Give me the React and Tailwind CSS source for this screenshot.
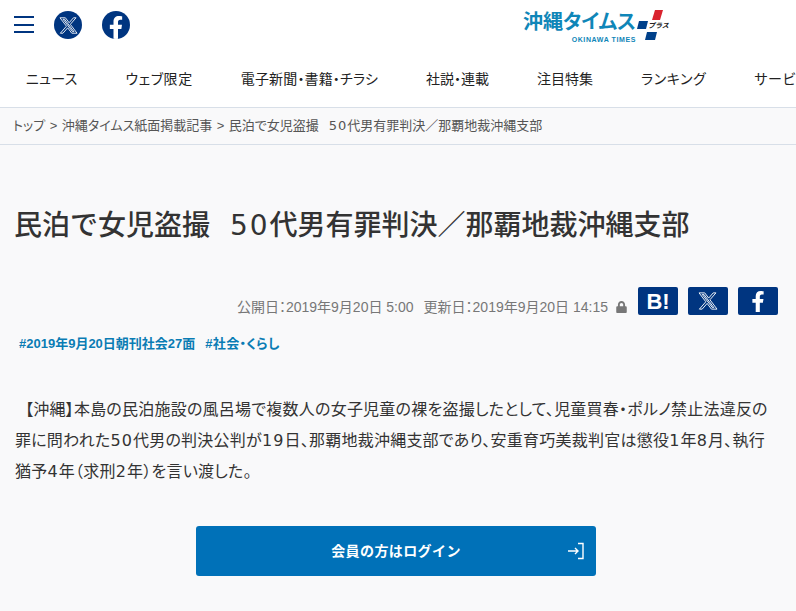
import React from "react";
import { FaFacebookF, FaLock } from "react-icons/fa";

const navItems = [
  { label: "ニュース", cls: "tracking-[0.25px]" },
  { label: "ウェブ限定", cls: "tracking-[0.6px]" },
  { label: "電子新聞・書籍・チラシ", cls: "tracking-[0.15px]" },
  { label: "社説・連載", cls: "" },
  { label: "注目特集", cls: "" },
  { label: "ランキング", cls: "tracking-[0.6px]" },
  { label: "サービス", cls: "tracking-[0.6px]" },
];

// double struck X, outline only
function XLogo({ className }) {
  return (
    <svg viewBox="0 0 24 24" className={className} fill="none" stroke="currentColor" strokeWidth="1.1">
      <path d="M18.244 2.25h3.308l-7.227 8.26 8.502 11.24H16.17l-5.214-6.817L4.99 21.75H1.68l7.73-8.835L1.254 2.25H8.08l4.713 6.231zm-1.161 17.52h1.833L7.084 4.126H5.117z" />
    </svg>
  );
}

// wide digits of the original font
function Num({ children }) {
  return <span className="font-['DejaVu_Sans'] tracking-[0.07em]">{children}</span>;
}

function Logo() {
  return (
    <div className="flex items-start ml-[393px] mt-[10px] w-[146px] h-[32px]">
      <div className="flex flex-col items-end w-[113px] shrink-0 pt-[1px]">
        <span className="text-[20px] leading-[23px] font-bold text-[#0f86b8] whitespace-nowrap [font-feature-settings:'palt']">沖縄タイムス</span>
        <span className="text-[7px] leading-[9px] font-bold tracking-[0.6px] text-[#0f86b8] whitespace-nowrap mt-[1px]">OKINAWA TIMES</span>
      </div>
      <div className="relative w-[33px] h-[32px] shrink-0">
        <svg viewBox="0 0 33 32" className="w-[33px] h-[32px]" aria-hidden="true">
          <path d="M16 10 L19 0 H27 L24 10 Z" fill="#d9232e" />
          <path d="M3 11 H12 L10 19 H1 Z" fill="#00408a" />
          <path d="M11 22 H21 L19 30 H9 Z" fill="#00408a" />
        </svg>
        <span className="absolute left-[12px] top-[11px] text-[7px] leading-[9px] font-bold italic text-[#222] whitespace-nowrap">プラス</span>
      </div>
    </div>
  );
}

export default function App() {
  return (
    <div className="w-[796px] h-[611px] overflow-hidden bg-[#f9f9fa] text-[#333] font-['Liberation_Sans','Noto_Sans_CJK_JP',sans-serif]">
      {/* header */}
      <header className="bg-white h-[108px] border-b border-[#d8dfe8]">
        <div className="flex h-[52px] items-start">
          <div className="flex flex-col justify-between w-[20px] h-[17px] ml-[14px] mt-[16px]">
            <span className="block h-[2px] bg-[#003580]" />
            <span className="block h-[2px] bg-[#003580]" />
            <span className="block h-[2px] bg-[#003580]" />
          </div>
          <div className="flex items-center justify-center w-[28px] h-[28px] rounded-full bg-[#003580] text-white ml-[20px] mt-[11px]">
            <XLogo className="w-[19px] h-[19px]" />
          </div>
          <div className="flex items-end justify-center w-[28px] h-[28px] rounded-full bg-[#003580] text-white ml-[20px] mt-[11px] overflow-hidden">
            <FaFacebookF className="w-[18px] h-[23px]" />
          </div>
          <Logo />
        </div>
        <nav className="flex gap-[48px] pl-[26px] h-[55px] items-center overflow-hidden whitespace-nowrap text-[14px] text-[#222] [font-feature-settings:'palt']">
          {navItems.map((item) => (
            <span key={item.label} className={"shrink-0 " + item.cls}>{item.label}</span>
          ))}
        </nav>
      </header>

      {/* breadcrumb */}
      <div className="flex items-center h-[37px] pl-[13px] gap-[4.5px] border-b border-[#d8dfe8] text-[13px] text-[#555] whitespace-nowrap [font-feature-settings:'palt']">
        <span>トップ</span>
        <span>&gt;</span>
        <span>沖縄タイムス紙面掲載記事</span>
        <span>&gt;</span>
        <span>民泊で女児盗撮<span className="inline-block w-[10px]" /><Num>50</Num>代男有罪判決／那覇地裁沖縄支部</span>
      </div>

      <main className="px-[15px]">
        <h1 className="mt-[61px] -ml-[1px] text-[28px] leading-[40px] font-medium text-[#333] whitespace-nowrap">
          民泊で女児盗撮<span className="inline-block w-[20px]" /><Num>50</Num>代男有罪判決／那覇地裁沖縄支部
        </h1>

        <div className="flex items-center justify-end mt-[41px] mr-[3px] h-[28px]">
          <div className="flex items-center pt-[12px]">
            <span className="text-[14px] text-[#777] whitespace-nowrap [font-feature-settings:'palt']">公開日：2019年9月20日 5:00</span>
            <span className="ml-[10px] text-[14px] text-[#777] whitespace-nowrap [font-feature-settings:'palt']">更新日：2019年9月20日 14:15</span>
            <FaLock className="ml-[8px] w-[11px] h-[12px] text-[#777]" />
          </div>
          <div className="flex gap-[10px] ml-[11px]">
            <div className="flex items-center justify-center w-[40px] h-[28px] rounded-[2px] bg-[#003580] text-white text-[22px] font-bold">B!</div>
            <div className="flex items-center justify-center w-[40px] h-[28px] rounded-[2px] bg-[#003580] text-white">
              <XLogo className="w-[20px] h-[20px]" />
            </div>
            <div className="flex items-center justify-center w-[40px] h-[28px] rounded-[2px] bg-[#003580] text-white">
              <FaFacebookF className="w-[18px] h-[21px]" />
            </div>
          </div>
        </div>

        <div className="flex gap-[10px] mt-[19px] ml-[4px] text-[13px] leading-[20px] font-bold text-[#0a7cb4] [font-feature-settings:'palt']">
          <span>#2019年9月20日朝刊社会27面</span>
          <span className="tracking-[0.3px]">#社会・くらし</span>
        </div>

        <p className="mt-[40px] text-[16px] leading-[31px] tracking-[0.23px] text-[#333] w-[760px] indent-[10px] [font-feature-settings:'palt']">
          【沖縄】本島の民泊施設の風呂場で複数人の女子児童の裸を盗撮したとして、児童買春・ポルノ禁止法違反の罪に問われた<Num>50</Num>代男の判決公判が<Num>19</Num>日、那覇地裁沖縄支部であり、安重育巧美裁判官は懲役<Num>1</Num>年<Num>8</Num>月、執行猶予<Num>4</Num>年（求刑<Num>2</Num>年）を言い渡した。
        </p>

        <div className="mt-[39px] ml-[181px] grid grid-cols-[1fr_auto_1fr] items-center w-[400px] h-[50px] rounded-[3px] bg-[#0071b8] text-white text-[14px] tracking-[0.4px] font-bold">
          <span />
          <span>会員の方はログイン</span>
          <svg viewBox="0 0 18 18" className="w-[18px] h-[18px] justify-self-end mr-[11px]" fill="none" stroke="currentColor" strokeWidth="1.4">
            <path d="M11 1.5H16V16.5H11" />
            <path d="M1 9H11M8 6L11 9L8 12" />
          </svg>
        </div>
      </main>
    </div>
  );
}
